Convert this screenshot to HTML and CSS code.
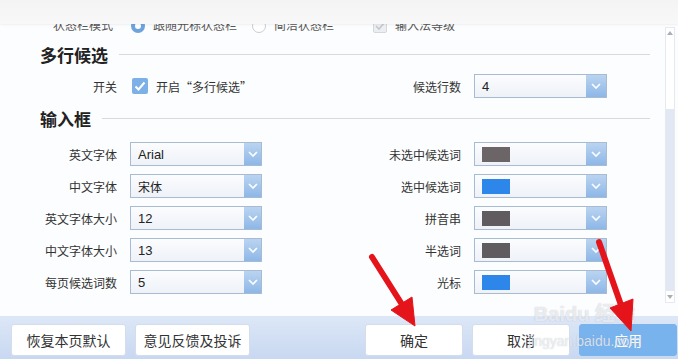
FILE: index.html
```html
<!DOCTYPE html>
<html lang="zh-CN">
<head>
    <meta charset="UTF-8">
    <meta name="viewport" content="width=device-width, initial-scale=1.0">
    <title>属性设置 - 外观</title>
    <link rel="stylesheet" href="styles.css">
</head>
<body>
<div class="window">
    <div class="topbar"></div>

    <div class="main">
        <div class="panel">
            <div class="row-cut">
                <span class="cut-label">状态栏模式</span>
                <span class="opt"><i class="radio on"></i>跟随光标状态栏</span>
                <span class="opt"><i class="radio"></i>简洁状态栏</span>
                <span class="opt"><i class="check off"></i>输入法等级</span>
            </div>

            <div class="section-title first"><span>多行候选</span><i class="rule"></i></div>
            <div class="grid grid-one">
                <label class="lbl">开关</label>
                <div class="checkline"><i class="check"></i>开启“多行候选”</div>
                <label class="lbl">候选行数</label>
                <div class="select wide"><span>4</span><i class="drop"></i></div>
            </div>

            <div class="section-title"><span>输入框</span><i class="rule"></i></div>
            <div class="grid grid-two">
                <label class="lbl">英文字体</label>
                <div class="select"><span>Arial</span><i class="drop"></i></div>
                <label class="lbl">未选中候选词</label>
                <div class="select wide"><b class="swatch" style="background:#6b6567"></b><i class="drop"></i></div>

                <label class="lbl">中文字体</label>
                <div class="select"><span class="cjk">宋体</span><i class="drop"></i></div>
                <label class="lbl">选中候选词</label>
                <div class="select wide"><b class="swatch" style="background:#2d87ea"></b><i class="drop"></i></div>

                <label class="lbl">英文字体大小</label>
                <div class="select"><span>12</span><i class="drop"></i></div>
                <label class="lbl">拼音串</label>
                <div class="select wide"><b class="swatch" style="background:#5f5b5e"></b><i class="drop"></i></div>

                <label class="lbl">中文字体大小</label>
                <div class="select"><span>13</span><i class="drop"></i></div>
                <label class="lbl">半选词</label>
                <div class="select wide"><b class="swatch" style="background:#5f5b5e"></b><i class="drop"></i></div>

                <label class="lbl">每页候选词数</label>
                <div class="select"><span>5</span><i class="drop"></i></div>
                <label class="lbl">光标</label>
                <div class="select wide"><b class="swatch" style="background:#2d87ea"></b><i class="drop"></i></div>
            </div>
        </div>

        <div class="scrollbar">
            <i class="sb-up"></i>
            <div class="sb-track"><div class="sb-thumb"></div></div>
            <i class="sb-down"></i>
        </div>
    </div>

    <div class="footer">
        <div class="btn-group">
            <button class="btn">恢复本页默认</button>
            <button class="btn">意见反馈及投诉</button>
        </div>
        <div class="btn-group">
            <button class="btn short">确定</button>
            <button class="btn short">取消</button>
            <button class="btn short primary">应用</button>
        </div>
    </div>

    <div class="watermark">
        <span class="wm-big">Bai<em>du</em> 经验</span>
        <span class="wm-small">jingyan.baidu.com</span>
    </div>

    <svg class="marks" width="678" height="359" viewBox="0 0 678 359">
        <g fill="#e5141b" stroke="#e5141b">
            <line x1="372" y1="257" x2="403" y2="306" stroke-width="6" stroke-linecap="round"/>
            <polygon points="415,326 391,310 412,297" stroke-width="1"/>
            <line x1="599" y1="242" x2="621" y2="305" stroke-width="6" stroke-linecap="round"/>
            <polygon points="631,331 610,308 633,299" stroke-width="1"/>
        </g>
    </svg>
</div>
</body>
</html>
```

FILE: styles.css
```css
body {
    margin: 0;
    font-family: "Noto Sans CJK SC", "Liberation Sans", sans-serif;
    color: #333;
    background: #fcfdfe;
}

.window {
    position: relative;
    width: 678px;
    height: 359px;
    overflow: hidden;
    display: flex;
    flex-direction: column;
}

.topbar {
    height: 24px;
    background: linear-gradient(#f4f4f5, #f8f8f9);
    box-shadow: 0 1px 2px rgba(0, 0, 0, 0.06);
    position: relative;
    z-index: 1;
}

.main {
    flex: 1;
    display: flex;
    overflow: hidden;
    background: #fcfdfe;
}

.panel {
    width: 650px;
    box-sizing: border-box;
    padding-left: 40px;
}

/* half hidden row under the top bar */
.row-cut {
    display: flex;
    align-items: center;
    height: 24px;
    margin-top: -12px;
    font-size: 12px;
    color: #555;
}
.cut-label {
    width: 73px;
    text-align: right;
    margin-right: 18px;
}
.opt {
    width: 121px;
    display: flex;
    align-items: center;
    gap: 8px;
    white-space: nowrap;
}
.radio {
    width: 12px;
    height: 12px;
    border-radius: 50%;
    border: 1px solid #c9ced6;
    background: #fff;
    margin-top: 4px;
}
.radio.on {
    border: 4px solid #6ea3dc;
    width: 6px;
    height: 6px;
    background: #fff;
}

.section-title {
    display: flex;
    align-items: center;
    gap: 11px;
    height: 24px;
    margin-top: 8px;
    font-size: 17px;
    font-weight: bold;
    color: #222;
}
.section-title.first {
    margin-top: 6px;
}
.rule {
    flex: 1;
    height: 1px;
    background: #d6d9de;
}

.grid {
    display: grid;
    grid-template-columns: 77px 132px 186px 133px;
    grid-auto-rows: 24px;
    column-gap: 13px;
    row-gap: 8px;
    align-items: center;
    font-size: 12px;
}
.grid-one {
    margin-top: 8px;
}
.grid-two {
    margin-top: 12px;
}

.lbl {
    text-align: right;
    color: #333;
    white-space: nowrap;
}

.checkline {
    display: flex;
    align-items: center;
    gap: 8px;
    font-size: 12px;
    margin-left: 2px;
    white-space: nowrap;
}
.check {
    width: 16px;
    height: 16px;
    border-radius: 2px;
    background: #7db0e6 url("data:image/svg+xml,%3Csvg xmlns='http://www.w3.org/2000/svg' width='16' height='16'%3E%3Cpath d='M3.5 8.5l3 3 6-7' fill='none' stroke='%23fff' stroke-width='2'/%3E%3C/svg%3E") no-repeat center;
}
.check.off {
    width: 14px;
    height: 14px;
    margin-top: 4px;
    background: #eceef1 url("data:image/svg+xml,%3Csvg xmlns='http://www.w3.org/2000/svg' width='14' height='14'%3E%3Cpath d='M3 7l3 3 5-6' fill='none' stroke='%23c4c8ce' stroke-width='1.6'/%3E%3C/svg%3E") no-repeat center;
    border: 1px solid #d4d7dc;
    box-sizing: border-box;
}

.select {
    position: relative;
    height: 24px;
    box-sizing: border-box;
    border: 1px solid #a8bbd0;
    background: linear-gradient(#fbfcfe, #eef2f8);
    display: flex;
    align-items: center;
    padding-left: 7px;
    font-family: "Liberation Sans", "Noto Sans CJK SC", sans-serif;
    font-size: 13px;
    color: #222;
}
.select .cjk {
    font-family: "Noto Sans CJK SC", sans-serif;
    font-size: 12px;
}
.drop {
    position: absolute;
    top: 0;
    right: 0;
    bottom: 0;
    width: 17px;
    background: url("data:image/svg+xml,%3Csvg xmlns='http://www.w3.org/2000/svg' width='10' height='6'%3E%3Cpath d='M1 1l4 4 4-4' fill='none' stroke='%23fff' stroke-width='1.6'/%3E%3C/svg%3E") no-repeat center, linear-gradient(#bad4f1, #8db7e7);
}
.select.wide .drop {
    width: 20px;
}
.swatch {
    width: 28px;
    height: 15px;
    display: block;
}

.scrollbar {
    width: 10px;
    margin: 3px 0 0 15px;
    height: 276px;
    border: 1px solid #e6e9ee;
    box-sizing: border-box;
    background: #fff;
    display: flex;
    flex-direction: column;
}
.sb-up,
.sb-down {
    height: 9px;
    background: url("data:image/svg+xml,%3Csvg xmlns='http://www.w3.org/2000/svg' width='6' height='4'%3E%3Cpath d='M0 4l3-4 3 4z' fill='%23a9aeb6'/%3E%3C/svg%3E") no-repeat center;
}
.sb-down {
    transform: rotate(180deg);
}
.sb-track {
    flex: 1;
    display: flex;
    flex-direction: column;
    justify-content: flex-end;
    padding-bottom: 2px;
}
.sb-thumb {
    height: 182px;
    background: #e2e8f3;
}

.footer {
    height: 43px;
    box-sizing: border-box;
    padding: 8px 1px 0 11px;
    background: linear-gradient(#dde7f7, #c8d8f1);
    display: flex;
    justify-content: space-between;
    align-items: flex-start;
}
.btn-group {
    display: flex;
    gap: 9px;
}
.btn {
    width: 115px;
    height: 32px;
    border: 1px solid #d3ddec;
    border-radius: 3px;
    background: #fff;
    font-family: "Noto Sans CJK SC", sans-serif;
    font-size: 14px;
    color: #333;
    padding: 0;
}
.btn.short {
    width: 98px;
}
.btn.primary {
    background: #79b3ee;
    border-color: #79b3ee;
    color: #fff;
}

.watermark {
    position: absolute;
    left: 528px;
    top: 304px;
    display: flex;
    flex-direction: column;
    align-items: center;
    color: rgba(255, 255, 255, 0.7);
    text-shadow: 0 0 1px rgba(120, 130, 150, 0.5);
    pointer-events: none;
    line-height: 1;
}
.wm-big {
    font-family: "Liberation Sans", "Noto Sans CJK SC", sans-serif;
    font-size: 20px;
    font-weight: bold;
}
.wm-big em {
    font-style: normal;
}
.wm-small {
    font-family: "Liberation Sans", sans-serif;
    font-size: 14px;
    margin-top: 10px;
}

.marks {
    position: absolute;
    left: 0;
    top: 0;
    pointer-events: none;
}
```
